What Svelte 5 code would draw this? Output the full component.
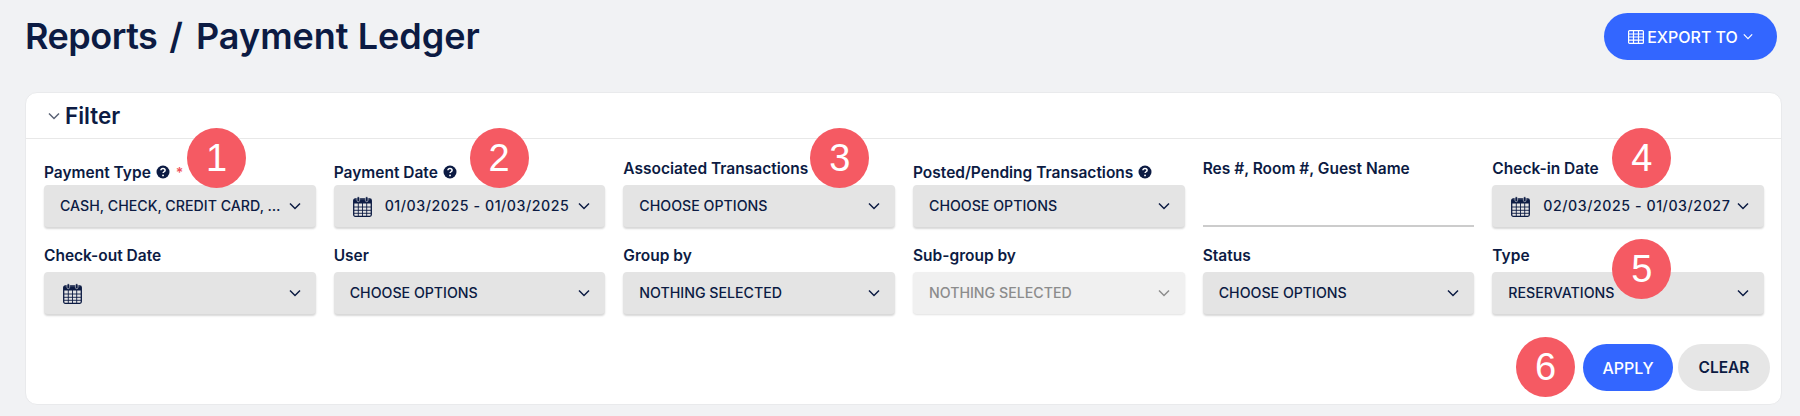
<script>
	const fields = [
		{ label: "Payment Type", value: "CASH, CHECK, CREDIT CARD, …", help: true, required: true, badge: 1, bx: 143, by: 39 },
		{ label: "Payment Date", value: "01/03/2025 - 01/03/2025", help: true, date: true, badge: 2, bx: 136, by: 39 },
		{ label: "Associated Transactions", value: "CHOOSE OPTIONS", badge: 3, bx: 187, by: 39 },
		{ label: "Posted/Pending Transactions", value: "CHOOSE OPTIONS", help: true },
		{ label: "Res #, Room #, Guest Name", input: true },
		{ label: "Check-in Date", value: "02/03/2025 - 01/03/2027", date: true, badge: 4, bx: 120, by: 39 },
		{ label: "Check-out Date", value: "", date: true },
		{ label: "User", value: "CHOOSE OPTIONS" },
		{ label: "Group by", value: "NOTHING SELECTED" },
		{ label: "Sub-group by", value: "NOTHING SELECTED", disabled: true },
		{ label: "Status", value: "CHOOSE OPTIONS" },
		{ label: "Type", value: "RESERVATIONS", badge: 5, bx: 120, by: 15 }
	]
</script>

{#snippet chevron(cls)}
	<svg class={cls} viewBox="0 0 12 8" fill="none" stroke="currentColor" stroke-width="1.5"><path d="M1 1.5l5 5 5-5" /></svg>
{/snippet}

<div class="page">
	<header class="top">
		<h1><span class="crumb">Reports</span><span class="slash">/</span><span>Payment Ledger</span></h1>
		<button class="export">
			<svg class="table" viewBox="0 0 16 14" fill="none" stroke="currentColor" stroke-width="1.2">
				<rect x="0.6" y="0.6" width="14.8" height="12.8" rx="1" />
				<path d="M0.6 4h14.8M0.6 7h14.8M0.6 10.2h14.8M5.5 0.6v12.8M10.5 0.6v12.8" />
			</svg>
			<span>EXPORT TO</span>
			{@render chevron("chev-small")}
		</button>
	</header>

	<section class="card">
		<div class="card-head">
			{@render chevron("chev-head")}
			<h2>Filter</h2>
		</div>
		<div class="grid">
			{#each fields as f}
				<div class="field">
					<div class="label" class:with-help={f.help}>
						<span>{f.label}</span>
						{#if f.help}
							<svg class="help" viewBox="0 0 14 14">
								<circle cx="7" cy="7" r="6.5" fill="#0c1b43" />
								<path d="M4.9 5.3c.1-1.3 1-1.9 2.1-1.9 1.2 0 2.1.7 2.1 1.8 0 1.6-2 1.5-2 2.9" fill="none" stroke="#fff" stroke-width="1.5" />
								<circle cx="7.05" cy="10.4" r="0.95" fill="#fff" />
							</svg>
						{/if}
						{#if f.required}<span class="req">*</span>{/if}
					</div>
					{#if f.input}
						<input class="text" type="text" />
					{:else}
						<div class="select" class:disabled={f.disabled}>
							{#if f.date}
								<svg class="cal" viewBox="0 0 19 21">
									<rect x="0.7" y="3" width="17.6" height="17.3" rx="1.5" fill="none" stroke="#0c1b43" stroke-width="1.3" />
									<path d="M1 3.5h17v4H1z" fill="#0c1b43" />
									<path d="M1 11h17M1 14.3h17M1 17.3h17M5.3 7v13M9.5 7v13M13.7 7v13" stroke="#0c1b43" stroke-width="0.9" />
									<rect x="4" y="0.7" width="2.6" height="5" rx="1.3" fill="#0c1b43" stroke="#e4e4e4" stroke-width="0.6" />
									<rect x="12.4" y="0.7" width="2.6" height="5" rx="1.3" fill="#0c1b43" stroke="#e4e4e4" stroke-width="0.6" />
								</svg>
							{/if}
							<span class="val" class:dates={f.date}>{f.value}</span>
							{@render chevron("chev")}
						</div>
					{/if}
					{#if f.badge}<span class="badge" style="left: {f.bx}px; bottom: {f.by}px">{f.badge}</span>{/if}
				</div>
			{/each}
		</div>
		<div class="actions">
			<span class="badge six">6</span>
			<button class="apply">APPLY</button>
			<button class="clear">CLEAR</button>
		</div>
	</section>
</div>

<style>
	:global(body) {
		background: #f1f2f4;
	}

	.page {
		height: 416px;
		box-sizing: border-box;
		padding: 13px 18px 0 25px;
		background: #f1f2f4;
		font-family: Inter, "Liberation Sans", sans-serif;
		color: #0c1b43;
	}

	.top {
		display: flex;
		justify-content: space-between;
		align-items: center;
		height: 47px;
		margin-right: 5px;
		margin-bottom: 32px;
	}

	h1 {
		margin: 0;
		font-size: 36px;
		font-weight: 600;
		display: flex;
		position: relative;
		top: -1px;
	}

	.crumb {
		letter-spacing: -0.5px;
	}

	.slash {
		margin: 0 13px 0 12px;
	}

	button {
		font-family: inherit;
		border: none;
		cursor: pointer;
		border-radius: 24px;
		font-size: 16px;
		font-weight: 500;
	}

	.export {
		width: 173px;
		height: 47px;
		background: #3366ff;
		color: #fff;
		display: flex;
		align-items: center;
		justify-content: center;
		gap: 3px;
		padding: 0;
		font-size: 16px;
	}

	.table {
		width: 16px;
		height: 14px;
	}

	.chev-small {
		width: 10px;
		height: 7px;
		margin-left: 2px;
	}

	.card {
		height: 313px;
		width: 1757px;
		box-sizing: border-box;
		background: #fff;
		border: 1px solid #e9eaec;
		border-radius: 12px;
		display: flex;
		flex-direction: column;
	}

	.card-head {
		display: flex;
		align-items: center;
		gap: 4px;
		height: 45px;
		flex: none;
		padding-left: 21px;
		border-bottom: 1px solid #e8e8e8;
	}

	.chev-head {
		width: 14px;
		height: 8px;
		color: #5a6275;
	}

	h2 {
		margin: 0;
		font-size: 22.5px;
		font-weight: 600;
	}

	.grid {
		display: grid;
		grid-template-columns: repeat(6, 1fr);
		column-gap: 18px;
		row-gap: 18px;
		padding: 19px 17px 0 18px;
	}

	.field {
		position: relative;
		display: flex;
		flex-direction: column;
		justify-content: flex-end;
	}

	.label {
		display: flex;
		align-items: center;
		height: 20px;
		margin-bottom: 7px;
		font-size: 15.5px;
		font-weight: 600;
		white-space: nowrap;
	}

	.label.with-help {
		margin-bottom: 3px;
	}

	.help {
		width: 14px;
		height: 14px;
		margin-left: 5px;
	}

	.req {
		color: #f0525c;
		margin-left: 6px;
		font-size: 14px;
	}

	.select {
		display: flex;
		align-items: center;
		height: 42px;
		box-sizing: border-box;
		padding: 0 15px 0 16px;
		background: #e4e4e4;
		border-radius: 4px;
		box-shadow: 0 2px 2px rgba(0, 0, 0, 0.16);
		font-size: 14.2px;
		font-weight: 500;
		white-space: nowrap;
	}

	.select.disabled {
		background: #f0f0f0;
		color: #8c8c8c;
		box-shadow: 0 1px 2px rgba(0, 0, 0, 0.12);
	}

	.val {
		flex: 1;
		position: relative;
		top: -1px;
	}

	.val.dates {
		letter-spacing: 0.55px;
	}

	.cal {
		width: 19px;
		height: 21px;
		margin-right: 13px;
		margin-left: 3px;
		flex: none;
	}

	.chev {
		width: 12px;
		height: 8px;
		flex: none;
	}

	.text {
		display: block;
		height: 42px;
		box-sizing: border-box;
		border: none;
		border-bottom: 2px solid #cccccc;
		background: transparent;
		width: 100%;
	}

	.actions {
		position: relative;
		display: flex;
		justify-content: flex-end;
		gap: 5px;
		margin-top: 30px;
		padding-right: 11px;
	}

	.apply {
		width: 90px;
		height: 47px;
		background: #3366ff;
		color: #fff;
	}

	.clear {
		width: 92px;
		height: 47px;
		background: #e6e6e6;
		color: #0c1b43;
		font-size: 15.5px;
		font-weight: 600;
	}

	.badge {
		position: absolute;
		width: 59px;
		height: 60px;
		border-radius: 50%;
		background: #f55a63;
		color: #fff;
		display: flex;
		align-items: center;
		justify-content: center;
		font-family: "Liberation Sans", sans-serif;
		font-size: 38px;
	}

	.six {
		right: 206px;
		bottom: -6px;
	}
</style>
